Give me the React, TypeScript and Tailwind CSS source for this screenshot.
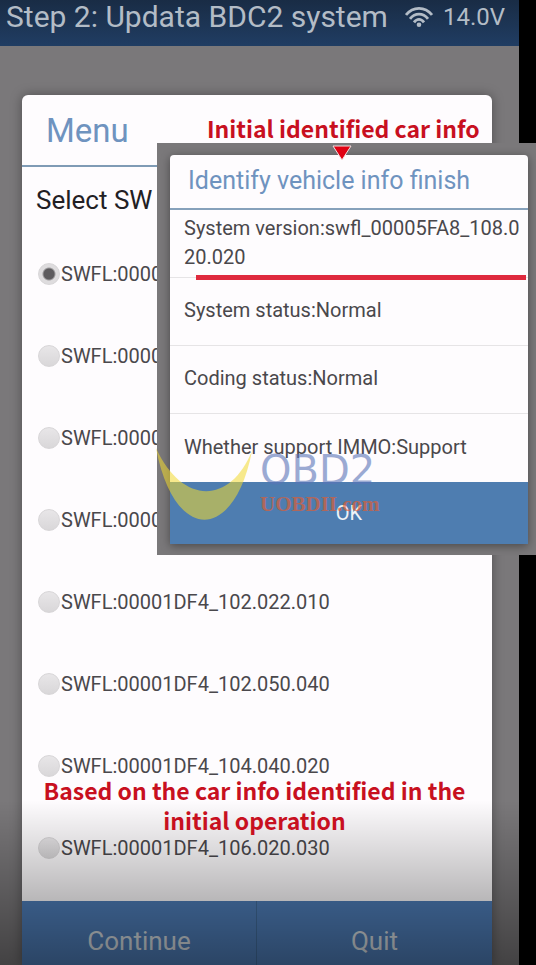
import { useState } from "react";

const versions = [
  { id: "v1", label: "SWFL:0000" },
  { id: "v2", label: "SWFL:0000" },
  { id: "v3", label: "SWFL:0000" },
  { id: "v4", label: "SWFL:0000" },
  { id: "v5", label: "SWFL:00001DF4_102.022.010" },
  { id: "v6", label: "SWFL:00001DF4_102.050.040" },
  { id: "v7", label: "SWFL:00001DF4_104.040.020" },
  { id: "v8", label: "SWFL:00001DF4_106.020.030" },
];

function WifiIcon() {
  return (
    <svg viewBox="0 0 28 20" className="h-5 w-7 shrink-0" fill="none" stroke="currentColor" strokeWidth="2.8" aria-hidden="true">
      <path d="M1 8C8-.8 20-.8 27 8" />
      <path d="M5 11.800C10 5.500 18 5.500 23 11.800" />
      <path d="M9 15.400C12 11.400 16 11.400 19 15.400" />
      <circle cx="14" cy="17.700" r="2.300" fill="currentColor" stroke="none" />
    </svg>
  );
}

function TopBar() {
  return (
    <header className="flex h-[46px] items-center bg-linear-to-b from-[#192c45] to-[#203d63] pr-[14px] pb-3 pl-[6px] text-[#b3bcc6]">
      <h1 className="text-[30px] leading-8 whitespace-nowrap">Step 2: Updata BDC2 system</h1>
      <div className="ml-auto flex items-center gap-[10px]">
        <WifiIcon />
        <span className="text-2xl leading-8">14.0V</span>
      </div>
    </header>
  );
}

function MenuCard() {
  const [selected, setSelected] = useState("v1");

  return (
    <main className="mt-[49px] mr-[27px] ml-[22px] flex grow flex-col overflow-hidden rounded-t-md bg-[#fefcfe] shadow-[0_0_12px_rgba(0,0,0,0.35)]">
      <h2 className="h-[72px] border-b-2 border-[#7f9bb5] px-6 pt-4 text-[33px] leading-10 text-[#6f93bf]">Menu</h2>
      <fieldset className="grow pb-3">
        <legend className="px-[14px] pt-4 pb-4 text-[26px] leading-[34px] text-[#222024]">Select SW</legend>
        {versions.map((v) => (
          <label key={v.id} className="flex h-[82px] items-center px-4 text-xl text-[#4a484c]">
            <input
              type="radio"
              name="version"
              value={v.id}
              checked={selected === v.id}
              onChange={() => setSelected(v.id)}
              className="size-[22px] shrink-0 appearance-none rounded-full border border-[#d8d6d8] bg-linear-to-b from-[#e8e6e8] to-[#d9d7d9] checked:bg-[radial-gradient(circle,#5d5b5e_0_5px,#dedcde_7px)]"
            />
            <span className="pl-px">{v.label}</span>
          </label>
        ))}
      </fieldset>
      <div className="grid h-16 grid-cols-2 bg-[#4e7db8] text-[26px] leading-8 text-[#d6dde2]">
        <button type="button" className="border-r border-[#416b99] pt-4">Continue</button>
        <button type="button" className="pt-4">Quit</button>
      </div>
    </main>
  );
}

function VehicleInfoDialog() {
  return (
    <div className="absolute top-[143px] right-0 left-[157px] bg-[#7a787a] pt-3 pr-2 pb-[11px] pl-[13px]">
      <section role="dialog" aria-labelledby="info-title" className="rounded-t bg-[#fefcfe] text-xl text-[#4a484c] shadow-[0_2px_10px_rgba(0,0,0,0.4)]">
        <h2 id="info-title" className="h-[55px] border-b-2 border-[#86a1bb] px-[18px] pt-[10px] text-[25px] leading-8 text-[#6f93bf]">
          Identify vehicle info finish
        </h2>
        <p className="relative h-[68px] border-b border-[#e6e4e6] pt-1 pr-2 pl-[14px] leading-[29px] break-all">
          System version:swfl_00005FA8_108.020.020
          <span className="absolute right-[2px] -bottom-[3px] left-[26px] h-[5px] bg-[#df2a3e]" />
        </p>
        <p className="flex h-[68px] items-center border-b border-[#e6e4e6] px-[14px] pb-[3px]">System status:Normal</p>
        <p className="flex h-[68px] items-center border-b border-[#e6e4e6] px-[14px] pb-[3px]">Coding status:Normal</p>
        <p className="flex h-[68px] items-center px-[14px] pb-[3px]">Whether support IMMO:Support</p>
        <button type="button" className="h-[62px] w-full bg-[#4e7db0] text-xl text-[#eef3f7]">OK</button>
      </section>
    </div>
  );
}

function Watermark() {
  return (
    <div className="pointer-events-none absolute top-[448px] left-[156px] flex gap-2">
      <svg viewBox="0 0 96 72" className="h-[72px] w-24 opacity-55" aria-hidden="true">
        <path d="M0 0C26 57 74 57 96 3C78 95 18 95 0 0Z" fill="#f2da30" />
      </svg>
      <div className="flex flex-col opacity-60">
        <span className="font-['DejaVu_Sans',sans-serif] text-[40px] leading-[44px] text-[#5a74b8]">OBD2</span>
        <span className="font-['Liberation_Serif',serif] text-[21px] leading-6 font-bold text-[#f05a24]">UOBDII.com</span>
      </div>
    </div>
  );
}

export default function App() {
  return (
    <div className="relative flex min-h-screen flex-col overflow-hidden bg-black font-[Roboto,sans-serif]">
      <div className="relative mr-[17px] flex grow flex-col bg-[#7a787a]">
        <TopBar />
        <MenuCard />
        <div className="pointer-events-none absolute inset-x-0 bottom-0 h-[165px] bg-linear-to-b from-black/0 to-black/45" />
      </div>
      <VehicleInfoDialog />
      <Watermark />
      <p className="absolute top-[112px] left-[207px] font-['Noto_Sans_CJK_SC',sans-serif] text-[23px] leading-8 font-bold whitespace-nowrap text-[#c8101f]">
        Initial identified car info
      </p>
      <svg viewBox="0 0 20 16" className="absolute top-[145px] left-[332px] h-4 w-5" aria-hidden="true">
        <path d="M1 1H19L10 15Z" fill="#e00012" stroke="#f4dfe0" strokeWidth="1" />
      </svg>
      <p className="absolute bottom-[130px] left-[22px] w-[465px] px-4 text-center font-['Noto_Sans_CJK_SC',sans-serif] text-[23px] leading-[30px] font-bold text-[#c8101f]">
        Based on the car info identified in the initial operation
      </p>
    </div>
  );
}
